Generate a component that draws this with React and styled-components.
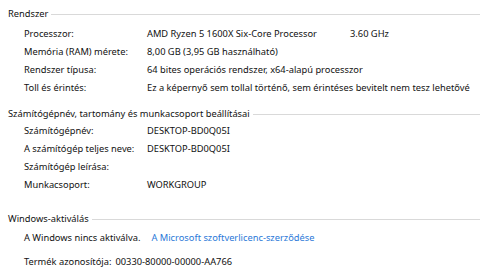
import React from 'react';
import styled, { createGlobalStyle } from 'styled-components';

const GlobalStyle = createGlobalStyle`
  body {
    margin: 0;
    background: #ffffff;
    font-family: 'Noto Sans', 'Liberation Sans', sans-serif;
    font-size: 9.3px;
    color: #111111;
  }
`;

const Page = styled.div`
  width: 480px;
  height: 277px;
  overflow: hidden;
  padding: 6px 0 0 8px;
  box-sizing: border-box;
`;

const Section = styled.section`
  margin-top: ${(p) => p.$top || 0}px;
`;

const Header = styled.div`
  display: flex;
  align-items: center;
  height: 16px;
  line-height: 16px;
  gap: 3px;
`;

const HeaderLine = styled.div`
  flex: 1;
  height: 1px;
  background: #d9d9d9;
  margin-top: 1px;
`;

const Rows = styled.div`
  padding-left: 16px;
  margin-top: ${(p) => p.$top || 0}px;
`;

const Row = styled.div`
  display: grid;
  grid-template-columns: 123px auto;
  height: 18px;
  line-height: 18px;
  white-space: nowrap;
`;

const Value = styled.span`
  display: flex;
`;

const Cpu = styled.span`
  width: 203px;
`;

const Inline = styled.div`
  display: flex;
  gap: ${(p) => p.$gap}px;
  height: ${(p) => p.$h || 18}px;
  line-height: 18px;
  white-space: nowrap;
`;

const Link = styled.a`
  color: #2a78d8;
  text-decoration: none;
`;

const systemRows = [
  ['Memória (RAM) mérete:', '8,00 GB (3,95 GB használható)'],
  ['Rendszer típusa:', '64 bites operációs rendszer, x64-alapú processzor'],
  ['Toll és érintés:', 'Ez a képernyő sem tollal történő, sem érintéses bevitelt nem tesz lehetővé'],
];

const nameRows = [
  ['Számítógépnév:', 'DESKTOP-BD0Q05I'],
  ['A számítógép teljes neve:', 'DESKTOP-BD0Q05I'],
  ['Számítógép leírása:', ''],
  ['Munkacsoport:', 'WORKGROUP'],
];

export default function App() {
  return (
    <>
      <GlobalStyle />
      <Page>
        <Section>
          <Header>
            Rendszer
            <HeaderLine />
          </Header>
          <Rows $top={3}>
            <Row>
              <span>Processzor:</span>
              <Value>
                <Cpu>AMD Ryzen 5 1600X Six-Core Processor</Cpu>
                <span>3.60 GHz</span>
              </Value>
            </Row>
            {systemRows.map(([label, value]) => (
              <Row key={label}>
                <span>{label}</span>
                <span>{value}</span>
              </Row>
            ))}
          </Rows>
        </Section>

        <Section $top={9}>
          <Header>
            Számítógépnév, tartomány és munkacsoport beállításai
            <HeaderLine />
          </Header>
          <Rows $top={0}>
            {nameRows.map(([label, value]) => (
              <Row key={label}>
                <span>{label}</span>
                <span>{value}</span>
              </Row>
            ))}
          </Rows>
        </Section>

        <Section $top={17}>
          <Header>
            Windows-aktiválás
            <HeaderLine />
          </Header>
          <Rows $top={2}>
            <Inline $gap={11} $h={24}>
              <span>A Windows nincs aktiválva.</span>
              <Link href="#">A Microsoft szoftverlicenc-szerződése</Link>
            </Inline>
            <Inline $gap={4}>
              <span>Termék azonosítója:</span>
              <span>00330-80000-00000-AA766</span>
            </Inline>
          </Rows>
        </Section>
      </Page>
    </>
  );
}
